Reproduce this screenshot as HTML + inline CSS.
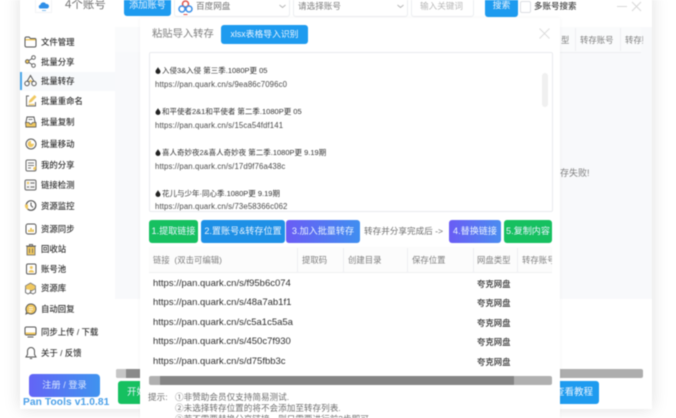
<!DOCTYPE html>
<html lang="zh"><head><meta charset="utf-8"><title>Pan Tools</title>
<style>
html,body{margin:0;padding:0;width:676px;height:418px;overflow:hidden;background:#fff}
body{font-family:"Liberation Sans","Noto Sans CJK SC",sans-serif;position:relative}
#r{position:absolute;left:0;top:0;width:676px;height:418px;overflow:hidden;filter:blur(.4px)}
#r div,#r svg{position:absolute}
.t{white-space:nowrap;line-height:12px}
.nav{left:41px;font-size:8.4px;color:#333;font-weight:500;white-space:nowrap;line-height:12px}
.btn{color:#eaf4ff;font-size:9.5px;text-align:center;border-radius:3px;white-space:nowrap}
.box{background:#fff;border:1px solid #eceef1;border-top:0;border-radius:0 0 3px 3px;box-sizing:border-box}
.th{top:254px;font-size:8.4px;color:#808080;white-space:nowrap;line-height:12px}
.sep{top:248px;width:1px;height:24px;background:#eeeff1}
.link{left:153px;font-size:9.5px;color:#2f2f2f;white-space:nowrap;line-height:12px}
.type{left:477px;font-size:8.4px;color:#2f2f2f;font-weight:500;white-space:nowrap;line-height:12px}
.ta1{left:5px;font-size:7.5px;color:#333;white-space:nowrap;line-height:10px}
.ta2{left:5px;font-size:7.8px;color:#4a4a4a;white-space:nowrap;line-height:10px;letter-spacing:.12px}
.tip{font-size:8.6px;color:#6f6f6f;white-space:nowrap;line-height:11px}
.bt{font-size:9.1px;line-height:23px;top:220px;height:23px}
svg{overflow:visible}
#r svg.d{position:static;vertical-align:-1px;margin-right:1px}
</style></head><body><div id="r">

<!-- window -->
<div style="left:20px;top:-10px;width:632px;height:419px;background:#fff;box-shadow:0 0 16px rgba(0,0,0,.13)"></div>
<div style="left:115px;top:27px;width:537px;height:272px;background:#f8f9fb"></div>
<div style="left:115px;top:27px;width:526px;height:25px;background:#fafbfc"></div>

<!-- header -->
<div style="left:35px;top:-3px;width:17px;height:16px;background:#fff;border:1px solid #f2f3f5;border-top:0;box-sizing:border-box"></div>
<svg style="left:39px;top:1px" width="10" height="10" viewBox="0 0 10 10"><path d="M1 7.500a2 2 0 0 1 .4-3.800A3 3 0 0 1 7 3a2.300 2.300 0 0 1 1.300 4.500z" fill="#2f8fe8"/><path d="M3 9.500h4" stroke="#7fbdf0" stroke-width="1"/></svg>
<div class="t" style="left:65px;top:-2px;font-size:11.500px;color:#707070;line-height:14px">4个账号</div>
<div class="btn" style="left:124px;top:-3px;width:47px;height:19px;background:#1e9bef;line-height:17px;font-size:9.200px">添加账号</div>

<div class="box" style="left:174px;top:-2px;width:116px;height:19px"></div>
<svg style="left:178px;top:0" width="15" height="16" viewBox="0 0 15 16"><circle cx="7.500" cy="4" r="3" fill="none" stroke="#e0534a" stroke-width="1.500"/><circle cx="4" cy="9" r="3" fill="none" stroke="#3a8fe8" stroke-width="1.500"/><circle cx="11" cy="9" r="3" fill="none" stroke="#3a8fe8" stroke-width="1.500"/><path d="M5.500 14.500h4" stroke="#e0534a" stroke-width="1"/></svg>
<div class="t" style="left:196px;top:0;font-size:8.600px;color:#707070">百度网盘</div>
<svg style="left:279px;top:4px" width="7" height="5" viewBox="0 0 7 5"><path d="M.5 1l3 2.500L6.500 1" fill="none" stroke="#b5b5b5" stroke-width="1"/></svg>

<div class="box" style="left:293px;top:-2px;width:115px;height:19px"></div>
<div class="t" style="left:298px;top:0;font-size:8.600px;color:#808080">请选择账号</div>
<svg style="left:397px;top:4px" width="7" height="5" viewBox="0 0 7 5"><path d="M.5 1l3 2.500L6.500 1" fill="none" stroke="#b5b5b5" stroke-width="1"/></svg>

<div class="box" style="left:411px;top:-2px;width:63px;height:19px"></div>
<div class="t" style="left:420px;top:0;font-size:8.600px;color:#b8b8b8">输入关键词</div>
<div class="btn" style="left:485px;top:-3px;width:33px;height:20px;background:#1e9bef;line-height:17px;font-size:8.800px">搜索</div>
<div style="left:520px;top:1px;width:9px;height:10px;border:1px solid #dcdfe3;border-radius:2px;background:#fff"></div>
<div class="t" style="left:534px;top:0;font-size:8.500px;color:#444;font-weight:500">多账号搜索</div>
<svg style="left:616px;top:1px" width="26" height="12" viewBox="0 0 26 12"><path d="M1 5.500h10" stroke="#d8d8d8" stroke-width="1"/><path d="M16 1l9 9M25 1l-9 9" stroke="#d8d8d8" stroke-width="1"/></svg>

<!-- sidebar -->
<div style="left:20px;top:72px;width:95px;height:19px;background:#f7f9fb"></div>
<div style="left:20px;top:72px;width:2px;height:18px;background:#4aa6ea"></div>

<svg style="left:24px;top:36px" width="13" height="12" viewBox="0 0 13 12"><path d="M1 2.500Q1 1 2.500 1H5l1.500 1.500h4.500Q12 2.500 12 4v5.500Q12 11 10.500 11h-8Q1 11 1 9.500z" fill="#fff" stroke="#555" stroke-width="1"/><path d="M1.500 3h10v1.500h-10z" fill="#f0c860"/></svg>
<div class="nav" style="top:36px">文件管理</div>

<svg style="left:25px;top:55px" width="11" height="13" viewBox="0 0 11 13"><circle cx="2.300" cy="6.500" r="1.800" fill="#f0c860" stroke="#555" stroke-width=".9"/><circle cx="8.500" cy="2.500" r="1.800" fill="#fff" stroke="#555" stroke-width=".9"/><circle cx="8.500" cy="10.500" r="1.800" fill="#fff" stroke="#555" stroke-width=".9"/><path d="M4 5.500l3-2M4 7.500l3 2" stroke="#555" stroke-width=".9"/></svg>
<div class="nav" style="top:56px">批量分享</div>

<svg style="left:24px;top:74px" width="13" height="13" viewBox="0 0 13 13"><path d="M6.500 1.500l3.500 6H3z" fill="#fff" stroke="#555" stroke-width="1"/><circle cx="3" cy="9.500" r="2.200" fill="#fff" stroke="#555" stroke-width="1"/><circle cx="10" cy="9.500" r="2.200" fill="#fff" stroke="#555" stroke-width="1"/><circle cx="6.500" cy="7" r="1.300" fill="#f0c860"/></svg>
<div class="nav" style="top:75px">批量转存</div>

<svg style="left:25px;top:94px" width="12" height="13" viewBox="0 0 12 13"><path d="M4 2H1.500v10h9V8" fill="none" stroke="#666" stroke-width="1"/><path d="M3.500 9l1-3L9.500 1l2 2-5 5z" fill="#f0c860"/><path d="M3.500 10.500h6" stroke="#f0c860" stroke-width="1.200"/></svg>
<div class="nav" style="top:95px">批量重命名</div>

<svg style="left:24px;top:116px" width="13" height="12" viewBox="0 0 13 12"><path d="M3 1h7l1 5v5H2V6z" fill="#fff" stroke="#555" stroke-width="1"/><path d="M1.500 6.500h3.500l1 1.500h1.500l1-1.500h3.500V11h-10z" fill="#f0c860" stroke="#555" stroke-width=".8"/><path d="M4.500 3.500h4" stroke="#555" stroke-width=".8"/></svg>
<div class="nav" style="top:116px">批量复制</div>

<svg style="left:25px;top:138px" width="12" height="12" viewBox="0 0 12 12"><circle cx="6" cy="6" r="5" fill="#fff" stroke="#555" stroke-width="1"/><path d="M6 2.800v3H9a3.200 3.200 0 1 1-3-3z" fill="#f0c860"/></svg>
<div class="nav" style="top:138px">批量移动</div>

<svg style="left:25px;top:159px" width="12" height="13" viewBox="0 0 12 13"><rect x="1" y="1" width="10" height="11" rx="1.500" fill="#fff" stroke="#666" stroke-width="1"/><path d="M3 4h6M3 6.500h6M3 9h3" stroke="#777" stroke-width=".9"/><path d="M8 9l3-2v3l-2 1.500z" fill="#f0c860"/></svg>
<div class="nav" style="top:159px">我的分享</div>

<svg style="left:24px;top:179px" width="13" height="12" viewBox="0 0 13 12"><rect x="1" y="1" width="11" height="10" rx="1.500" fill="#f4f4f4" stroke="#666" stroke-width="1"/><circle cx="4" cy="4" r="1.200" fill="#f0c860"/><path d="M6.500 4h4M6.500 8h4M3 8h2" stroke="#666" stroke-width=".9"/></svg>
<div class="nav" style="top:179px">链接检测</div>

<svg style="left:24px;top:199px" width="13" height="13" viewBox="0 0 13 13"><circle cx="7" cy="6.500" r="4.800" fill="#fff" stroke="#555" stroke-width="1.200"/><path d="M7 3.500v3l2 2" fill="none" stroke="#555" stroke-width="1"/><path d="M1 5.500h3v5a4 4 0 0 1-3-5z" fill="#f0c860"/></svg>
<div class="nav" style="top:200px">资源监控</div>

<svg style="left:25px;top:223px" width="12" height="12" viewBox="0 0 12 12"><rect x="1" y="1" width="10" height="10" rx="2" fill="#fff" stroke="#555" stroke-width="1"/><path d="M4 9V7M6 9V5M8 9V6.500" stroke="#e0ad20" stroke-width="1.300"/></svg>
<div class="nav" style="top:223px">资源同步</div>

<svg style="left:25px;top:243px" width="12" height="13" viewBox="0 0 12 13"><path d="M1 3h10M4.500 3V1.500h3V3" fill="none" stroke="#666" stroke-width="1"/><path d="M2 3.500h8V12H2z" fill="#f0c860" stroke="#666" stroke-width=".8"/><path d="M4.500 5.500v4.500M7.500 5.500v4.500" stroke="#666" stroke-width=".8"/></svg>
<div class="nav" style="top:243px">回收站</div>

<svg style="left:25px;top:263px" width="12" height="12" viewBox="0 0 12 12"><rect x="1.500" y="1" width="9.500" height="10" rx="1.500" fill="#fff" stroke="#555" stroke-width="1"/><circle cx="6.300" cy="4.500" r="1.500" fill="#f0c860"/><path d="M3.500 9.500a2.800 2.500 0 0 1 5.600 0z" fill="#f0c860"/></svg>
<div class="nav" style="top:263px">账号池</div>

<svg style="left:24px;top:282px" width="13" height="13" viewBox="0 0 13 13"><path d="M6.500 1l5 2.800v3L6.500 9.500l-5-2.700v-3z" fill="#f0c860" stroke="#777" stroke-width=".8"/><path d="M1.500 7v3.500l2.500 1.500 2.500-1.500V8M6.500 10.500l2.500 1.500 2.500-1.500V7" fill="#fff" stroke="#666" stroke-width=".9"/></svg>
<div class="nav" style="top:282px">资源库</div>

<svg style="left:25px;top:303px" width="12" height="12" viewBox="0 0 12 12"><path d="M6 1a5 5 0 1 1-3 9L1 11l.6-2.500A5 5 0 0 1 6 1z" fill="#f0c860" stroke="#555" stroke-width="1"/><path d="M4 4.500h4M4 6.500h4M4 8.500h2.500" stroke="#fff" stroke-width=".8"/></svg>
<div class="nav" style="top:303px">自动回复</div>

<svg style="left:24px;top:326px" width="13" height="12" viewBox="0 0 13 12"><rect x="1" y="1" width="11" height="8" rx="1.500" fill="#fff" stroke="#555" stroke-width="1"/><path d="M1.500 6.500h10V8.500h-10z" fill="#f0c860"/><path d="M3.500 11h6" stroke="#555" stroke-width="1"/></svg>
<div class="nav" style="top:326px">同步上传 / 下载</div>

<svg style="left:25px;top:346px" width="12" height="14" viewBox="0 0 12 14"><path d="M6 1.500a3.500 3.500 0 0 1 3.500 3.500v3.500l1.500 2.500H1l1.500-2.500V5A3.500 3.500 0 0 1 6 1.500z" fill="#fff" stroke="#555" stroke-width="1"/><path d="M4.800 12.500h2.400" stroke="#555" stroke-width="1"/></svg>
<div class="nav" style="top:347px">关于 / 反馈</div>

<div class="btn" style="left:29px;top:374px;width:71px;height:23px;background:linear-gradient(90deg,#6364f6,#3f93ef);line-height:22px;font-size:9.200px;border-radius:4px;color:#d9e6ff">注册 / 登录</div>
<div class="t" style="left:23px;top:397px;font-size:10.200px;font-weight:bold;color:#4a9fe8;letter-spacing:.1px">Pan Tools v1.0.81</div>

<!-- behind modal -->
<div class="t" style="left:561px;top:34px;font-size:8.400px;color:#808080">型</div>
<div class="t" style="left:580px;top:34px;font-size:8.400px;color:#808080">转存账号</div>
<div style="left:575px;top:28px;width:1px;height:23px;background:#eeeff1"></div>
<div style="left:620px;top:28px;width:1px;height:23px;background:#eeeff1"></div>
<div class="t" style="left:625px;top:34px;font-size:8.400px;color:#808080;width:18px;overflow:hidden">转存账</div>
<div style="left:560px;top:52px;width:81px;height:1px;background:#eceef1"></div>
<div class="t" style="left:560px;top:167px;font-size:9px;color:#808080">存失败!</div>
<div style="left:116px;top:369px;width:527px;height:9px;background:#adadad;border-radius:2px"></div>
<div style="left:116px;top:369px;width:10px;height:9px;background:#c6c6c6;border-radius:2px 0 0 2px"></div>
<div style="left:126px;top:369px;width:14px;height:9px;background:#8a8a8a"></div>
<div class="btn" style="left:118px;top:381px;width:40px;height:23px;background:#16c060;line-height:23px;text-align:left;text-indent:9px;overflow:hidden">开始</div>
<div class="btn" style="left:545px;top:381px;width:54px;height:23px;background:#1e9bef;line-height:23px;text-align:right;padding-right:6px;box-sizing:border-box">查看教程</div>

<!-- modal -->
<div style="left:140px;top:18px;width:420px;height:410px;background:#fff;box-shadow:0 0 4px rgba(0,0,0,.05)"></div>
<div class="t" style="left:152px;top:28px;font-size:10.300px;color:#808080;line-height:13px">粘贴导入转存</div>
<div class="btn" style="left:221px;top:25px;width:87px;height:19px;background:#1e9bef;line-height:19px;font-size:8.800px">xlsx表格导入识别</div>
<svg style="left:539px;top:28px" width="11" height="11" viewBox="0 0 11 11"><path d="M.5.500l10 10M10.500.500l-10 10" stroke="#dcdcdc" stroke-width="1"/></svg>

<!-- textarea -->
<div style="left:149px;top:52px;width:404px;height:160px;background:#fff;border:1px solid #e9ebee;box-sizing:border-box;border-radius:2px;overflow:hidden"></div>
<div style="left:542px;top:73px;width:6px;height:34px;background:#f0f0f0;border-radius:3px"></div>
<div style="left:150px;top:53px;width:390px;height:158px;overflow:hidden">
<div class="ta1" style="top:13px"><svg class="d" width="6" height="7" viewBox="0 0 6 7"><path d="M3 0C3.500 1.500 5.500 3 5.500 4.500a2.500 2.500 0 0 1-5 0C.5 3 2.500 1.500 3 0z" fill="#222"/></svg>入侵3&amp;入侵 第三季.1080P更 05</div>
<div class="ta2" style="top:27px">https://pan.quark.cn/s/9ea86c7096c0</div>
<div class="ta1" style="top:54px"><svg class="d" width="6" height="7" viewBox="0 0 6 7"><path d="M3 0C3.500 1.500 5.500 3 5.500 4.500a2.500 2.500 0 0 1-5 0C.5 3 2.500 1.500 3 0z" fill="#222"/></svg>和平使者2&amp;1和平使者 第二季.1080P更 05</div>
<div class="ta2" style="top:68px">https://pan.quark.cn/s/15ca54fdf141</div>
<div class="ta1" style="top:95px"><svg class="d" width="6" height="7" viewBox="0 0 6 7"><path d="M3 0C3.500 1.500 5.500 3 5.500 4.500a2.500 2.500 0 0 1-5 0C.5 3 2.500 1.500 3 0z" fill="#222"/></svg>喜人奇妙夜2&amp;喜人奇妙夜 第二季.1080P更 9.19期</div>
<div class="ta2" style="top:109px">https://pan.quark.cn/s/17d9f76a438c</div>
<div class="ta1" style="top:136px"><svg class="d" width="6" height="7" viewBox="0 0 6 7"><path d="M3 0C3.500 1.500 5.500 3 5.500 4.500a2.500 2.500 0 0 1-5 0C.5 3 2.500 1.500 3 0z" fill="#222"/></svg>花儿与少年·同心季.1080P更 9.19期</div>
<div class="ta2" style="top:149px">https://pan.quark.cn/s/73e58366c062</div>
</div>

<!-- action buttons -->
<div class="btn bt" style="left:149px;width:49px;background:#16c060">1.提取链接</div>
<div class="btn bt" style="left:201px;width:84px;background:#1e90e6">2.置账号&amp;转存位置</div>
<div class="btn bt" style="left:286px;width:74px;background:linear-gradient(90deg,#6a5cf5,#3f8ef0)">3.加入批量转存</div>
<div class="t" style="left:364px;top:225px;font-size:8.600px;color:#707070">转存并分享完成后 -&gt;</div>
<div class="btn bt" style="left:449px;width:52px;background:linear-gradient(90deg,#6a5cf5,#4a8cf0)">4.替换链接</div>
<div class="btn bt" style="left:504px;width:48px;background:#16c060">5.复制内容</div>

<!-- table -->
<div style="left:149px;top:247px;width:403px;height:26px;background:#fcfcfc;border-bottom:1px solid #eff0f2;box-sizing:border-box"></div>
<div class="th" style="left:153px">链接&nbsp; (双击可编辑)</div>
<div class="sep" style="left:297px"></div>
<div class="th" style="left:302px">提取码</div>
<div class="sep" style="left:343px"></div>
<div class="th" style="left:348px">创建目录</div>
<div class="sep" style="left:407px"></div>
<div class="th" style="left:412px">保存位置</div>
<div class="sep" style="left:473px"></div>
<div class="th" style="left:477px">网盘类型</div>
<div class="sep" style="left:517px"></div>
<div class="th" style="left:522px;width:30px;overflow:hidden">转存账号</div>

<div class="link" style="top:278px">https://pan.quark.cn/s/f95b6c074</div><div class="type" style="top:278px">夸克网盘</div>
<div class="link" style="top:297px">https://pan.quark.cn/s/48a7ab1f1</div><div class="type" style="top:297px">夸克网盘</div>
<div class="link" style="top:317px">https://pan.quark.cn/s/c5a1c5a5a</div><div class="type" style="top:317px">夸克网盘</div>
<div class="link" style="top:336px">https://pan.quark.cn/s/450c7f930</div><div class="type" style="top:336px">夸克网盘</div>
<div class="link" style="top:356px">https://pan.quark.cn/s/d75fbb3c</div><div class="type" style="top:356px">夸克网盘</div>

<div style="left:149px;top:376px;width:403px;height:9px;background:#b0b0b0;border-radius:2px"></div>
<div style="left:160px;top:376px;width:354px;height:9px;background:#858585"></div>

<!-- tips -->
<div class="tip" style="left:148px;top:392px">提示:</div>
<div class="tip" style="left:175px;top:392px">①非赞助会员仅支持简易测试.</div>
<div class="tip" style="left:175px;top:403px">②未选择转存位置的将不会添加至转存列表.</div>
<div class="tip" style="left:175px;top:414px">③若不需要替换分享链接，则只需要进行前3步即可</div>

</div></body></html>
